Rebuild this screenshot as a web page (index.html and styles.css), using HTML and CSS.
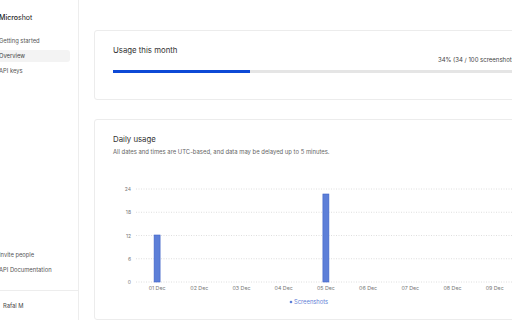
FILE: index.html
```
<!DOCTYPE html>
<html lang="en">
<head>
    <meta charset="UTF-8">
    <meta name="viewport" content="width=device-width, initial-scale=1.0">
    <title>Microshot - Overview</title>
    <link rel="stylesheet" href="styles.css">
</head>
<body>

<div class="layout">
    <!-- Sidebar -->
    <aside class="sidebar">
        <div class="brand"><b>Micro</b>shot</div>
        <nav class="nav">
            <a href="#" class="nav-item">Getting started</a>
            <a href="#" class="nav-item active">Overview</a>
            <a href="#" class="nav-item">API keys</a>
        </nav>
        <div class="spacer"></div>
        <nav class="nav">
            <a href="#" class="nav-item">Invite people</a>
            <a href="#" class="nav-item">API Documentation</a>
        </nav>
        <div class="user">Rafal M</div>
    </aside>

    <!-- Main content -->
    <main class="main">
        <section class="card usage-card">
            <h2>Usage this month</h2>
            <div class="usage-count">34% (34 / 100 screenshots)</div>
            <div class="progress"><div class="progress-fill" style="width: 34%"></div></div>
        </section>

        <section class="card daily-card">
            <h2>Daily usage</h2>
            <p class="note">All dates and times are UTC-based, and data may be delayed up to 5 minutes.</p>
            <svg class="chart" width="403" height="130" viewBox="0 0 403 130">
                <g class="grid">
                    <line x1="23" y1="10" x2="403" y2="10"/>
                    <line x1="23" y1="33.25" x2="403" y2="33.25"/>
                    <line x1="23" y1="56.5" x2="403" y2="56.5"/>
                    <line x1="23" y1="79.75" x2="403" y2="79.75"/>
                    <line x1="23" y1="103" x2="403" y2="103"/>
                </g>
                <g class="y-labels">
                    <text x="18" y="12">24</text>
                    <text x="18" y="35">18</text>
                    <text x="18" y="58.5">12</text>
                    <text x="18" y="81.5">6</text>
                    <text x="18" y="105">0</text>
                </g>
                <g class="bars">
                    <rect x="41.1" y="56" width="6" height="47"/>
                    <rect x="209.9" y="15" width="6" height="88"/>
                </g>
                <g class="x-labels">
                    <text x="44.1" y="111">01 Dec</text>
                    <text x="86.3" y="111">02 Dec</text>
                    <text x="128.5" y="111">03 Dec</text>
                    <text x="170.7" y="111">04 Dec</text>
                    <text x="212.9" y="111">05 Dec</text>
                    <text x="255.1" y="111">06 Dec</text>
                    <text x="297.3" y="111">07 Dec</text>
                    <text x="339.5" y="111">08 Dec</text>
                    <text x="381.7" y="111">09 Dec</text>
                </g>
                <g class="legend">
                    <circle cx="178" cy="123" r="1.3"/>
                    <text x="181" y="125">Screenshots</text>
                </g>
            </svg>
        </section>
    </main>
</div>

</body>
</html>
```

FILE: styles.css
```
/* Basic Styles */
* {
    box-sizing: border-box;
}

body {
    font-family: Inter, "Liberation Sans", sans-serif;
    background-color: #fff;
    color: #333;
    margin: 0;
    padding: 0;
    overflow: hidden;
}

.layout {
    display: flex;
    height: 320px;
}

/* Sidebar (scrolled a little off to the left) */
.sidebar {
    flex: 0 0 88px;
    margin-left: -9px;
    padding: 0 8px 0 4px;
    border-right: 1px solid #ededed;
    display: flex;
    flex-direction: column;
}

.brand {
    font-size: 7px;
    color: #222;
    padding: 13px 4px 0;
    height: 35px;
}

.brand b {
    font-weight: 500;
}

.nav {
    display: flex;
    flex-direction: column;
    gap: 3px;
}

.nav-item {
    font-size: 5.8px;
    line-height: 12px;
    padding: 0 4px;
    color: #555;
    text-decoration: none;
    border-radius: 3px;
}

.nav-item.active {
    background-color: #f3f3f3;
    color: #444;
}

.spacer {
    flex: 1;
}

.user {
    margin: 14px -8px 0 -4px;
    padding: 0 0 0 12px;
    border-top: 1px solid #ededed;
    height: 30px;
    line-height: 29px;
    font-size: 5.8px;
    color: #444;
}

/* Main area */
.main {
    padding: 30px 0 0 15px;
    display: flex;
    flex-direction: column;
    gap: 19px;
}

.card {
    width: 441px;
    background-color: white;
    border: 1px solid #ececec;
    border-radius: 3px;
    padding: 0 18px;
}

.card h2 {
    margin: 0;
    font-size: 7.8px;
    font-weight: 400;
    color: #333;
    line-height: 12px;
}

.usage-card {
    height: 70px;
    padding-top: 13px;
}

.usage-count {
    text-align: right;
    font-size: 6px;
    line-height: 8px;
    color: #444;
    margin-top: 0;
    margin-right: -1px;
}

.progress {
    margin-top: 6px;
    height: 3px;
    background-color: #e5e5e5;
}

.progress-fill {
    height: 100%;
    background-color: #0d49d6;
}

.daily-card {
    height: 202px;
    padding-top: 13px;
}

.note {
    margin: 3px 0 0;
    font-size: 5.9px;
    line-height: 8px;
    color: #666;
}

.chart {
    display: block;
    margin-top: 23px;
    overflow: visible;
}

.grid line {
    stroke: #d6d6d6;
    stroke-width: 0.8;
    stroke-dasharray: 1 1.5;
}

.y-labels text {
    font-size: 5px;
    fill: #777;
    text-anchor: end;
}

.x-labels text {
    font-size: 5.3px;
    fill: #777;
    text-anchor: middle;
}

.bars rect {
    fill: #5d7fd8;
    stroke: #3f63c9;
    stroke-width: 0.6;
}

.legend circle {
    fill: #5d7fd8;
}

.legend text {
    font-size: 5.8px;
    fill: #6482d6;
}
```
